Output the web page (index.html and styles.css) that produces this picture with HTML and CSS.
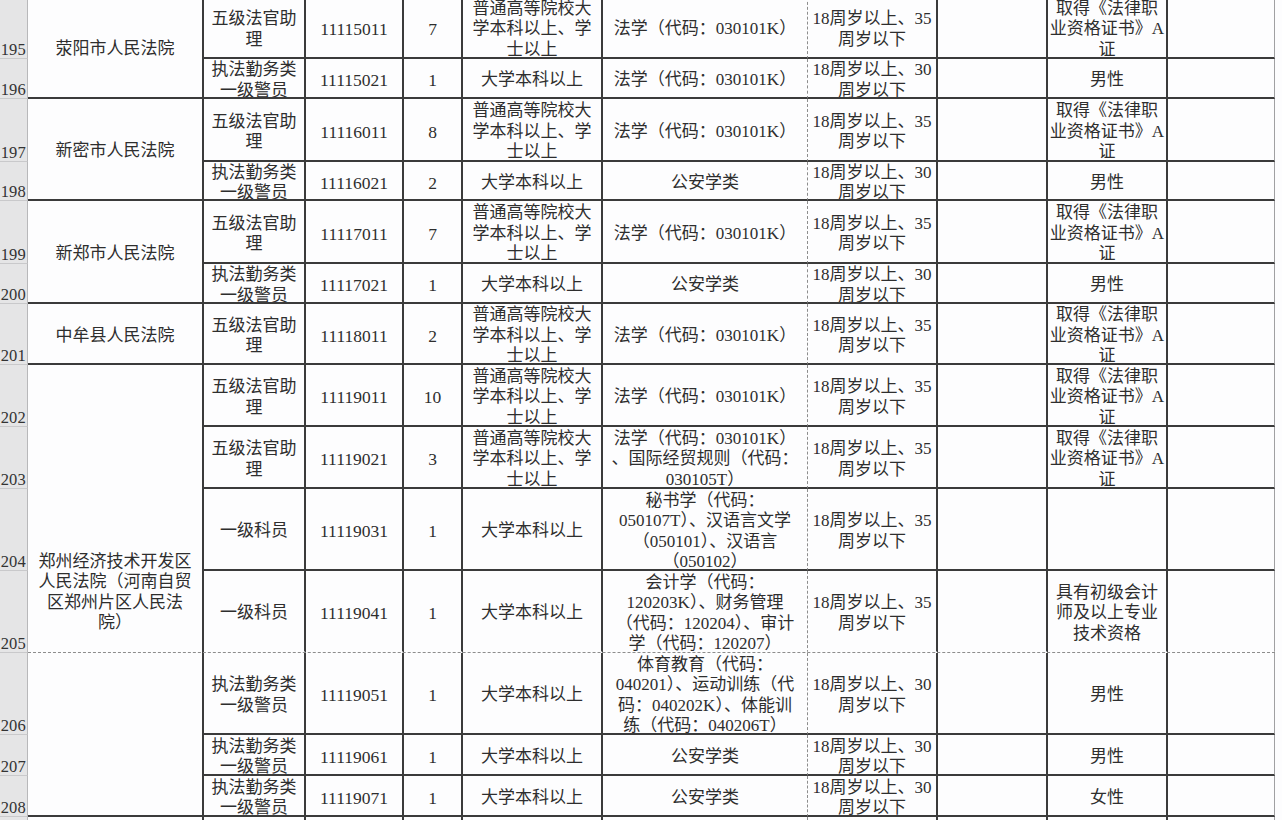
FILE: index.html
```html
<!DOCTYPE html>
<html lang="zh-CN">
<head>
<meta charset="utf-8">
<title>职位表</title>
<link rel="stylesheet" href="styles.css">
</head>
<body>
<div class="viewport">
  <div class="sheet">
    <!-- 195 -->
    <div class="rh">195</div>
    <div class="c court s2">荥阳市人民法院</div>
    <div class="c">五级法官助<br>理</div>
    <div class="c num">11115011</div>
    <div class="c num">7</div>
    <div class="c">普通高等院校大<br>学本科以上、学<br>士以上</div>
    <div class="c pb-v">法学（代码：030101K）</div>
    <div class="c">18周岁以上、35<br>周岁以下</div>
    <div class="c"></div>
    <div class="c">取得《法律职<br>业资格证书》A<br>证</div>
    <div class="c last"></div>
    <div class="x"></div>
    <!-- 196 -->
    <div class="rh">196</div>
    <div class="c">执法勤务类<br>一级警员</div>
    <div class="c num">11115021</div>
    <div class="c num">1</div>
    <div class="c">大学本科以上</div>
    <div class="c pb-v">法学（代码：030101K）</div>
    <div class="c">18周岁以上、30<br>周岁以下</div>
    <div class="c"></div>
    <div class="c">男性</div>
    <div class="c last"></div>
    <div class="x"></div>
    <!-- 197 -->
    <div class="rh">197</div>
    <div class="c court s2">新密市人民法院</div>
    <div class="c">五级法官助<br>理</div>
    <div class="c num">11116011</div>
    <div class="c num">8</div>
    <div class="c">普通高等院校大<br>学本科以上、学<br>士以上</div>
    <div class="c pb-v">法学（代码：030101K）</div>
    <div class="c">18周岁以上、35<br>周岁以下</div>
    <div class="c"></div>
    <div class="c">取得《法律职<br>业资格证书》A<br>证</div>
    <div class="c last"></div>
    <div class="x"></div>
    <!-- 198 -->
    <div class="rh">198</div>
    <div class="c">执法勤务类<br>一级警员</div>
    <div class="c num">11116021</div>
    <div class="c num">2</div>
    <div class="c">大学本科以上</div>
    <div class="c pb-v">公安学类</div>
    <div class="c">18周岁以上、30<br>周岁以下</div>
    <div class="c"></div>
    <div class="c">男性</div>
    <div class="c last"></div>
    <div class="x"></div>
    <!-- 199 -->
    <div class="rh">199</div>
    <div class="c court s2">新郑市人民法院</div>
    <div class="c">五级法官助<br>理</div>
    <div class="c num">11117011</div>
    <div class="c num">7</div>
    <div class="c">普通高等院校大<br>学本科以上、学<br>士以上</div>
    <div class="c pb-v">法学（代码：030101K）</div>
    <div class="c">18周岁以上、35<br>周岁以下</div>
    <div class="c"></div>
    <div class="c">取得《法律职<br>业资格证书》A<br>证</div>
    <div class="c last"></div>
    <div class="x"></div>
    <!-- 200 -->
    <div class="rh">200</div>
    <div class="c">执法勤务类<br>一级警员</div>
    <div class="c num">11117021</div>
    <div class="c num">1</div>
    <div class="c">大学本科以上</div>
    <div class="c pb-v">公安学类</div>
    <div class="c">18周岁以上、30<br>周岁以下</div>
    <div class="c"></div>
    <div class="c">男性</div>
    <div class="c last"></div>
    <div class="x"></div>
    <!-- 201 -->
    <div class="rh">201</div>
    <div class="c court">中牟县人民法院</div>
    <div class="c">五级法官助<br>理</div>
    <div class="c num">11118011</div>
    <div class="c num">2</div>
    <div class="c">普通高等院校大<br>学本科以上、学<br>士以上</div>
    <div class="c pb-v">法学（代码：030101K）</div>
    <div class="c">18周岁以上、35<br>周岁以下</div>
    <div class="c"></div>
    <div class="c">取得《法律职<br>业资格证书》A<br>证</div>
    <div class="c last"></div>
    <div class="x"></div>
    <!-- 202 -->
    <div class="rh">202</div>
    <div class="c court s7">郑州经济技术开发区<br>人民法院（河南自贸<br>区郑州片区人民法<br>院）</div>
    <div class="c">五级法官助<br>理</div>
    <div class="c num">11119011</div>
    <div class="c num">10</div>
    <div class="c">普通高等院校大<br>学本科以上、学<br>士以上</div>
    <div class="c pb-v">法学（代码：030101K）</div>
    <div class="c">18周岁以上、35<br>周岁以下</div>
    <div class="c"></div>
    <div class="c">取得《法律职<br>业资格证书》A<br>证</div>
    <div class="c last"></div>
    <div class="x"></div>
    <!-- 203 -->
    <div class="rh">203</div>
    <div class="c">五级法官助<br>理</div>
    <div class="c num">11119021</div>
    <div class="c num">3</div>
    <div class="c">普通高等院校大<br>学本科以上、学<br>士以上</div>
    <div class="c pb-v">法学（代码：030101K）<br>、国际经贸规则（代码：<br>030105T）</div>
    <div class="c">18周岁以上、35<br>周岁以下</div>
    <div class="c"></div>
    <div class="c">取得《法律职<br>业资格证书》A<br>证</div>
    <div class="c last"></div>
    <div class="x"></div>
    <!-- 204 -->
    <div class="rh">204</div>
    <div class="c">一级科员</div>
    <div class="c num">11119031</div>
    <div class="c num">1</div>
    <div class="c">大学本科以上</div>
    <div class="c pb-v">秘书学（代码：<br>050107T）、汉语言文学<br>（050101）、汉语言<br>（050102）</div>
    <div class="c">18周岁以上、35<br>周岁以下</div>
    <div class="c"></div>
    <div class="c"></div>
    <div class="c last"></div>
    <div class="x"></div>
    <!-- 205 -->
    <div class="rh pb">205</div>
    <div class="c pb">一级科员</div>
    <div class="c num pb">11119041</div>
    <div class="c num pb">1</div>
    <div class="c pb">大学本科以上</div>
    <div class="c pb-v pb">会计学（代码：<br>120203K）、财务管理<br>（代码：120204）、审计<br>学（代码：120207）</div>
    <div class="c pb">18周岁以上、35<br>周岁以下</div>
    <div class="c pb"></div>
    <div class="c pb">具有初级会计<br>师及以上专业<br>技术资格</div>
    <div class="c last pb"></div>
    <div class="x"></div>
    <!-- 206 -->
    <div class="rh">206</div>
    <div class="c">执法勤务类<br>一级警员</div>
    <div class="c num">11119051</div>
    <div class="c num">1</div>
    <div class="c">大学本科以上</div>
    <div class="c pb-v">体育教育（代码：<br>040201）、运动训练（代<br>码：040202K）、体能训<br>练（代码：040206T）</div>
    <div class="c">18周岁以上、30<br>周岁以下</div>
    <div class="c"></div>
    <div class="c">男性</div>
    <div class="c last"></div>
    <div class="x"></div>
    <!-- 207 -->
    <div class="rh">207</div>
    <div class="c">执法勤务类<br>一级警员</div>
    <div class="c num">11119061</div>
    <div class="c num">1</div>
    <div class="c">大学本科以上</div>
    <div class="c pb-v">公安学类</div>
    <div class="c">18周岁以上、30<br>周岁以下</div>
    <div class="c"></div>
    <div class="c">男性</div>
    <div class="c last"></div>
    <div class="x"></div>
    <!-- 208 -->
    <div class="rh">208</div>
    <div class="c">执法勤务类<br>一级警员</div>
    <div class="c num">11119071</div>
    <div class="c num">1</div>
    <div class="c">大学本科以上</div>
    <div class="c pb-v">公安学类</div>
    <div class="c">18周岁以上、30<br>周岁以下</div>
    <div class="c"></div>
    <div class="c">女性</div>
    <div class="c last"></div>
    <div class="x"></div>
    <!-- 209 (only its top edge is visible) -->
    <div class="rh"></div>
    <div class="c"></div>
    <div class="c"></div>
    <div class="c"></div>
    <div class="c"></div>
    <div class="c"></div>
    <div class="c pb-v"></div>
    <div class="c"></div>
    <div class="c"></div>
    <div class="c"></div>
    <div class="c last"></div>
    <div class="x"></div>

    <div class="page-break"></div>
  </div>
</div>
</body>
</html>
```
FILE: styles.css
```css
html, body {
  margin: 0;
  padding: 0;
  background: #fcfcfd;
}

.viewport {
  width: 1282px;
  height: 820px;
  overflow: hidden;
}

.sheet {
  position: relative;
  margin-top: -3px;
  display: grid;
  grid-template-columns: 28px 176px 102px 98px 59px 140px 205px 130px 110px 120px 107px 1fr;
  grid-template-rows: 62px 40px 63px 39px 63px 40px 61px 62px 62px 82px 82px 82px 41px 41px 41px;
  font-family: "Liberation Serif", "Noto Sans CJK SC", serif;
  font-size: 17px;
  line-height: 20.5px;
  color: #2e2e2e;
}

.rh {
  background: #e5e5e6;
  border-bottom: 1px solid #c9c9cb;
  border-right: 1px solid #b8b8ba;
  display: flex;
  align-items: flex-end;
  justify-content: flex-end;
  padding-right: 1px;
  font-size: 16.5px;
  line-height: 17px;
  color: #333;
  overflow: hidden;
  box-sizing: border-box;
  letter-spacing: 0.2px;
}

.c {
  box-sizing: border-box;
  border-right: 2px solid #3b3b3b;
  border-bottom: 2px solid #3b3b3b;
  background: #fdfdfe;
  display: flex;
  align-items: center;
  justify-content: center;
  text-align: center;
  white-space: nowrap;
  overflow: hidden;
  min-width: 0;
  min-height: 0;
  padding-top: 5px;
}

.num {
  font-size: 17.5px;
}

.court {
  font-size: 17px;
}

.s2 { grid-row: span 2; }
.s7 { grid-row: span 7; }

.pb-v {
  border-right: 1px dashed #8d8d8d;
}

.pb {
  border-bottom-color: transparent;
}

.rh.pb {
  border-bottom-color: #c9c9cb;
}

.last {
  border-right: 1px solid #a0a0a2;
}

.x {
  background: #fdfdfe;
}

.page-break {
  position: absolute;
  left: 28px;
  right: 7px;
  top: 655px;
  border-top: 1px dashed #8d8d8d;
}
```
